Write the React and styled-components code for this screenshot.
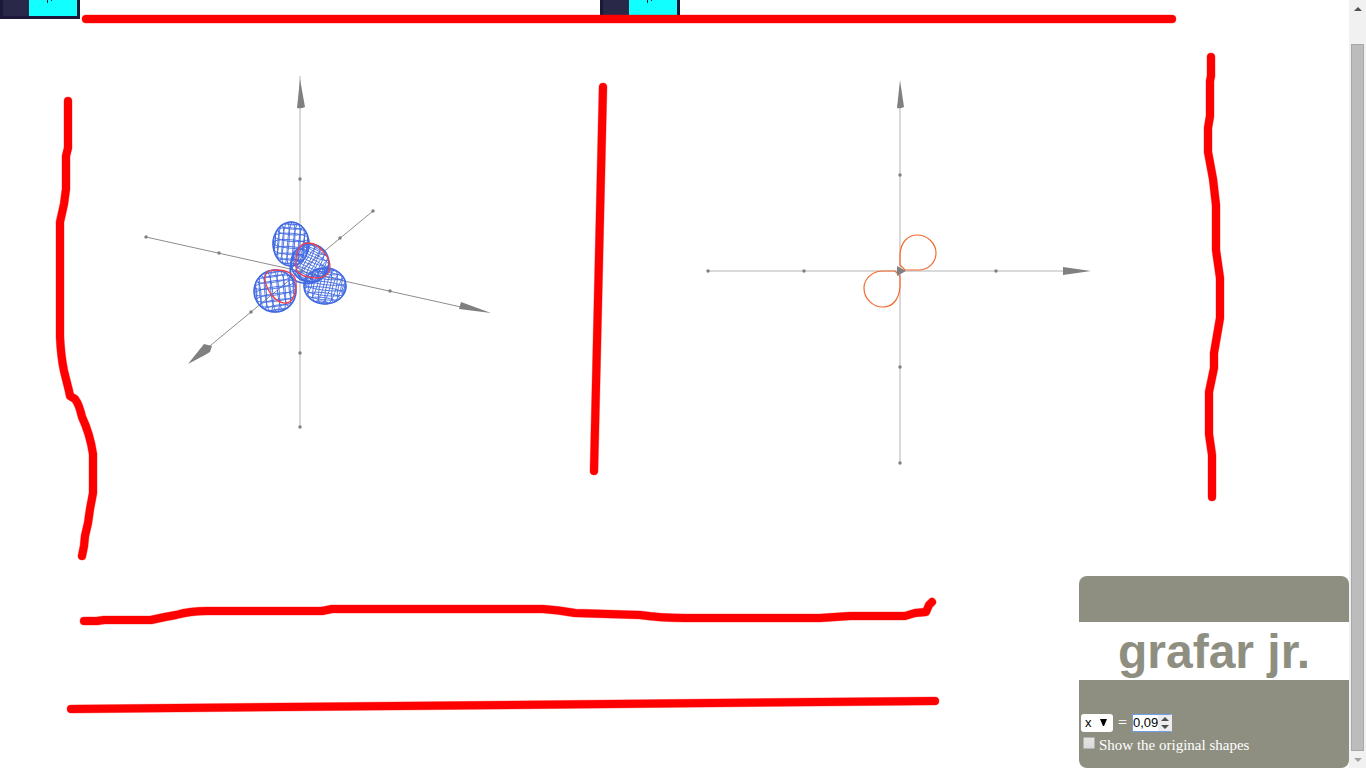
import React, { useState } from "react";
import styled, { createGlobalStyle } from "styled-components";

const GlobalStyle = createGlobalStyle`
  * { box-sizing: border-box; }
  body { margin: 0; background: #fff; overflow: hidden; }
`;

const Page = styled.div`
  position: relative;
  display: grid;
  grid-template-columns: minmax(0, 1fr) 17px;
  height: 100vh;
  overflow: hidden;
  font: 15px/22px "Liberation Serif", "Times New Roman", serif;
`;

const Stage = styled.main`
  position: relative;
  display: grid;
  grid-template-columns: repeat(2, minmax(0, 600px));
  align-items: start;
`;

const PlotFrame = styled.section`
  position: relative;
`;

const PlotSvg = styled.svg`
  display: block;
  width: 100%;
  height: auto;
`;

const StatsBadge = styled.div`
  position: absolute;
  top: 0;
  left: 0;
  display: grid;
  grid-template-columns: 26px 1fr;
  width: 80px;
  height: 19px;
  border: solid #1b1838;
  border-width: 0 3px 3px;
  background: #2a2849;
`;

const StatsGraph = styled.svg`
  grid-column: 2;
  width: 48px;
  height: 16px;
  background: #1ff;
`;

const Ink = styled.svg`
  position: absolute;
  inset: 0;
  width: 100%;
  height: 100%;
  pointer-events: none;
`;

const Panel = styled.aside`
  position: absolute;
  right: 0;
  bottom: 0;
  width: 270px;
  padding: 46px 0 12px;
  border-radius: 8px;
  background: #8e8f80;
  color: #fff;
`;

const Title = styled.h1`
  margin: 0 0 32px;
  padding-top: 2px;
  background: #fff;
  color: #8e8f80;
  font: bold 48px/56px "Liberation Sans", Arial, sans-serif;
  text-align: center;
`;

const Controls = styled.form`
  display: grid;
  padding: 0 2px;
`;

const Equation = styled.div`
  display: flex;
  align-items: center;
  gap: 5px;
  height: 22px;
  font-size: 16px;
`;

const AxisPicker = styled.span`
  position: relative;
  display: flex;
`;

const AxisSelect = styled.select`
  appearance: none;
  width: 32px;
  height: 18px;
  padding: 0 4px;
  border: 0;
  border-radius: 3px;
  background: #fff;
  color: #000;
  font: 13px/18px "Liberation Sans", Arial, sans-serif;
`;

const PickerArrow = styled.svg`
  position: absolute;
  top: 5px;
  right: 6px;
  pointer-events: none;
`;

const ValueField = styled.span`
  display: flex;
  width: 40px;
  height: 18px;
  background: #ededed;
  border: 1px solid #6d9ded;
  border-right-color: #ededed;
`;

const ValueInput = styled.input`
  width: 25px;
  height: 16px;
  padding: 0;
  border: 0;
  outline: 0;
  background: #fff;
  font: 13px/16px "Liberation Sans", Arial, sans-serif;
`;

const Spinner = styled.span`
  display: grid;
  flex: 1;
`;

const StepButton = styled.button`
  display: grid;
  place-items: center;
  height: 8px;
  padding: 0;
  border: 0;
  background: none;
`;

const ShapeToggle = styled.label`
  display: flex;
  align-items: center;
  gap: 4px;
  height: 22px;
  padding-left: 2px;
`;

const ToggleBox = styled.input`
  appearance: none;
  width: 12px;
  height: 12px;
  margin: 0 0 4px;
  border: 1px solid #b4b4b4;
  border-radius: 1px;
  background: linear-gradient(#e4e4e4, #dadada);
`;

const Scrollbar = styled.div`
  display: grid;
  grid-template-rows: 17px 1fr 17px;
  background: #f1f1f1;
`;

const ScrollButton = styled.button`
  display: grid;
  place-items: center;
  padding: 0;
  border: 0;
  background: none;
`;

const ScrollThumb = styled.div`
  margin: 27px 2px 0;
  border: 1px solid #a8a8a8;
  background: #bcbcbc;
`;

const GREY = "#808080";

/* Rings cut across a lobe along its two in-plane axes, projected flat. */
function lobeMesh({ cx, cy, rx, ry, turn, tilt }) {
  const project = (x, y, z) => {
    const y1 = y * Math.cos(tilt) - z * Math.sin(tilt);
    const z1 = y * Math.sin(tilt) + z * Math.cos(tilt);
    const x1 = x * Math.cos(tilt) + z1 * Math.sin(tilt);
    const px = x1 * Math.cos(turn) - y1 * Math.sin(turn);
    const py = x1 * Math.sin(turn) + y1 * Math.cos(turn);
    return `${(cx + rx * px).toFixed(1)} ${(cy + ry * py).toFixed(1)}`;
  };
  const ring = (pointAt) =>
    "M" + Array.from({ length: 25 }, (_, i) => pointAt((i * Math.PI) / 12)).join("L");
  const paths = [];
  for (let i = 1; i < 10; i += 1) {
    const offset = Math.cos((i * Math.PI) / 10);
    const radius = Math.sin((i * Math.PI) / 10);
    paths.push(ring((t) => project(offset, radius * Math.cos(t), radius * Math.sin(t))));
    paths.push(ring((t) => project(radius * Math.cos(t), offset, radius * Math.sin(t))));
  }
  return paths.join("");
}

const LOBES = [
  { cx: 291, cy: 244, rx: 18, ry: 22, turn: 0.1, tilt: 0.2 },
  { cx: 325, cy: 286, rx: 21, ry: 18, turn: 0.2, tilt: 0.25 },
  { cx: 275, cy: 291, rx: 21, ry: 21, turn: -0.1, tilt: 0.2 },
  { cx: 310, cy: 263, rx: 19, ry: 19, turn: 0.5, tilt: 0.25 },
];

function Ticks({ points }) {
  return points.map(([x, y]) => <circle key={`${x}-${y}`} cx={x} cy={y} r="1.7" fill={GREY} />);
}

function SpacePlot() {
  return (
    <PlotSvg viewBox="0 0 600 530" role="img" aria-label="Surface in three dimensions">
      <path d="M300 76V427" stroke="#d9d9d9" strokeWidth="2" />
      <path d="M146 237L470 309M373 211L205 350" stroke={GREY} strokeWidth="0.9" />
      <g fill="none" stroke="#4169e1" strokeWidth="0.9">
        {LOBES.map((lobe) => (
          <g key={lobe.cx}>
            <path d={lobeMesh(lobe)} />
            <ellipse cx={lobe.cx} cy={lobe.cy} rx={lobe.rx} ry={lobe.ry} strokeWidth="1.5" />
          </g>
        ))}
        <path d="M291 267Q288 281 303 283Q318 286 329 271M294 256Q288 266 291 278M296 271Q300 278 305 281" strokeWidth="1.5" />
      </g>
      <g fill="none" stroke="#f0404f" strokeWidth="1.3">
        <path d="M265 279C265 271 270 270 277 270C287 270 295 274 296 282C297 291 293 303 286 303C276 304 266 290 265 279Z" />
        <path d="M296 267C295 253 299 243 308 243C319 243 330 257 330 267C330 275 323 278 315 278C305 277 296 274 296 267Z" />
      </g>
      <g fill={GREY}>
        <path d="M300 79L305 107Q301 109 297 108Z" />
        <path d="M491 313L459 309L461 302Z" />
        <path d="M188 364L204 344L212 346L210 352L205 355Z" />
      </g>
      <Ticks
        points={[[300, 179], [300, 353], [300, 427], [146, 237], [219, 253], [390, 291], [373, 211], [340, 238], [251, 312]]}
      />
    </PlotSvg>
  );
}

function SlicePlot() {
  return (
    <PlotSvg viewBox="0 0 600 530" role="img" aria-label="Slice at the chosen value">
      <path d="M108 271H470M300 100V463" stroke="#d9d9d9" strokeWidth="2" />
      <g fill="none" stroke="#f26a2e" strokeWidth="1.2">
        <path d="M305 270H318C329 270 336 262 336 253C336 243 327 235 317 235C308 235 301 242 300 254V265L305 270" />
        <path d="M295 271H283C272 271 264 279 264 288C264 299 273 307 283 307C293 307 299 299 300 287V276L295 271" />
      </g>
      <g fill={GREY}>
        <path d="M300 80L304 107Q300 109 297 108Z" />
        <path d="M491 271L463 275V267Z" />
        <path d="M297 266L306 271L297 276Z" />
      </g>
      <Ticks points={[[300, 175], [300, 367], [300, 463], [108, 271], [204, 271], [396, 271]]} />
    </PlotSvg>
  );
}

function Stats() {
  return (
    <StatsBadge>
      <StatsGraph viewBox="0 0 48 16" aria-hidden="true">
        <path d="M18 0h1v3h-1zM22 0h1v1h-1z" fill="#1b1838" />
      </StatsGraph>
    </StatsBadge>
  );
}

const STROKES = [
  "M86 19H1172",
  "M68 101V148L66 156V189L64 204L60 222V337Q61 357 64 371L69 391L70 396L75 399Q79 404 82 417Q90 434 93 454V493L90 509L88 523L85 536L84 546L82 556",
  "M603 87L594 471",
  "M1211 57V76L1210 81V116L1208 128V152L1213 179L1216 205V250L1220 278V318L1214 353V368L1209 392V434L1212 455V497",
  "M84 621H97L104 620H151L165 617L176 615Q190 611 207 611H322L332 609H543Q558 610 575 613L640 615Q660 618 685 618H820L850 616H905L915 613L926 612L929 605L932 602",
  "M71 709L935 701",
];

function Triangle({ down, color = "#505050" }) {
  return (
    <svg width="8" height="4" viewBox="0 0 8 4" aria-hidden="true">
      <path d={down ? "M0 0H8L4 4Z" : "M0 4H8L4 0Z"} fill={color} />
    </svg>
  );
}

export default function App() {
  const [axis, setAxis] = useState("x");
  const [value, setValue] = useState("0,09");
  const [original, setOriginal] = useState(false);
  const step = (delta) =>
    setValue((v) => ((parseFloat(v.replace(",", ".")) || 0) + delta).toFixed(2).replace(".", ","));

  return (
    <Page>
      <GlobalStyle />
      <Stage>
        <PlotFrame>
          <SpacePlot />
          <Stats />
        </PlotFrame>
        <PlotFrame>
          <SlicePlot />
          <Stats />
        </PlotFrame>
        <Panel>
          <Title>grafar jr.</Title>
          <Controls onSubmit={(e) => e.preventDefault()}>
            <Equation>
              <AxisPicker>
                <AxisSelect aria-label="Axis" value={axis} onChange={(e) => setAxis(e.target.value)}>
                  <option>x</option>
                  <option>y</option>
                  <option>z</option>
                </AxisSelect>
                <PickerArrow width="7" height="7" viewBox="0 0 7 7" aria-hidden="true">
                  <path d="M0 0H7L4 7H3Z" fill="#000" />
                </PickerArrow>
              </AxisPicker>
              <span>=</span>
              <ValueField>
                <ValueInput aria-label="Value" value={value} onChange={(e) => setValue(e.target.value)} />
                <Spinner>
                  <StepButton type="button" aria-label="Increase" onClick={() => step(0.01)}>
                    <Triangle />
                  </StepButton>
                  <StepButton type="button" aria-label="Decrease" onClick={() => step(-0.01)}>
                    <Triangle down />
                  </StepButton>
                </Spinner>
              </ValueField>
            </Equation>
            <ShapeToggle>
              <ToggleBox type="checkbox" checked={original} onChange={(e) => setOriginal(e.target.checked)} />
              Show the original shapes
            </ShapeToggle>
          </Controls>
        </Panel>
      </Stage>
      <Scrollbar>
        <ScrollButton aria-label="Scroll up">
          <Triangle />
        </ScrollButton>
        <ScrollThumb />
        <ScrollButton aria-label="Scroll down">
          <Triangle down color="#a3a3a3" />
        </ScrollButton>
      </Scrollbar>
      <Ink viewBox="0 0 1366 768" preserveAspectRatio="xMinYMin meet" aria-hidden="true">
        <g fill="none" stroke="#f00" strokeLinecap="round" strokeLinejoin="round">
          {STROKES.map((d) => (
            <React.Fragment key={d}>
              <path d={d} strokeWidth="9" strokeOpacity="0.35" />
              <path d={d} strokeWidth="8" />
            </React.Fragment>
          ))}
        </g>
      </Ink>
    </Page>
  );
}
